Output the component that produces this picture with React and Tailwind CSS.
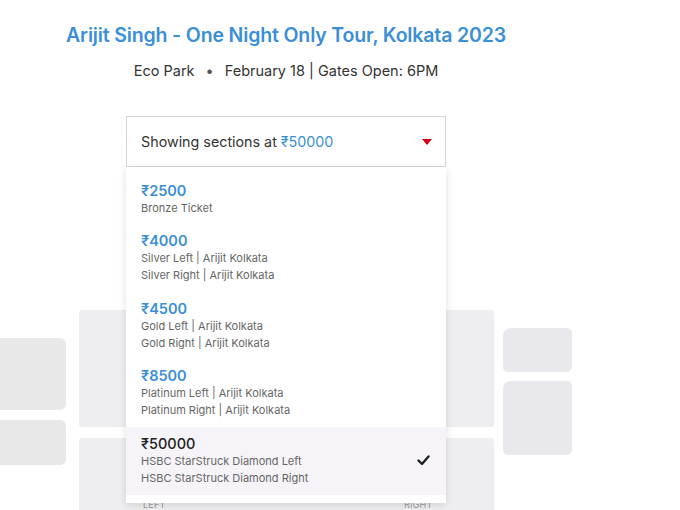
import React from "react";

const items = [
  { price: "₹2500", lines: ["Bronze Ticket"] },
  { price: "₹4000", lines: ["Silver Left | Arijit Kolkata", "Silver Right | Arijit Kolkata"] },
  { price: "₹4500", lines: ["Gold Left | Arijit Kolkata", "Gold Right | Arijit Kolkata"] },
  { price: "₹8500", lines: ["Platinum Left | Arijit Kolkata", "Platinum Right | Arijit Kolkata"] },
  { price: "₹50000", lines: ["HSBC StarStruck Diamond Left", "HSBC StarStruck Diamond Right"], selected: true },
];

function MapBlocks() {
  return (
    <div className="absolute inset-0">
      <div className="absolute left-0 top-[338px] w-[66px] h-[72px] bg-[#e8e8e8] rounded-r-[6px]" />
      <div className="absolute left-0 top-[420px] w-[66px] h-[45px] bg-[#e8e8e8] rounded-r-[6px]" />
      <div className="absolute left-[79px] top-[310px] w-[415px] h-[117px] bg-[#eeedf0] rounded-[3px]" />
      <div className="absolute left-[79px] top-[438px] w-[415px] h-[80px] bg-[#eeedf0] rounded-[3px]" />
      <div className="absolute left-[143px] top-[500px] text-[9px] leading-[10px] text-[#9a9a9a] tracking-wide">LEFT</div>
      <div className="absolute left-[404px] top-[500px] text-[9px] leading-[10px] text-[#9a9a9a] tracking-wide">RIGHT</div>
      <div className="absolute left-[503px] top-[328px] w-[69px] h-[44px] bg-[#e9e8ec] rounded-[5px] rounded-tl-[8px]" />
      <div className="absolute left-[503px] top-[381px] w-[69px] h-[74px] bg-[#e9e8ec] rounded-[5px] rounded-tl-[8px]" />
    </div>
  );
}

export default function App() {
  return (
    <div className="relative w-[680px] h-[510px] overflow-hidden bg-white font-['Inter','Noto_Sans',sans-serif]">
      <MapBlocks />
      <div className="relative w-[572px] flex flex-col items-center pt-[22px]">
        <h1 className="text-[19.5px] leading-[26px] font-semibold text-[#3a8fd6] tracking-[-0.15px]">
          Arijit Singh - One Night Only Tour, Kolkata 2023
        </h1>
        <p className="mt-[13px] text-[14.5px] leading-[20px] text-[#333333]">
          <span>Eco Park</span>
          <span className="mx-[11px] text-[#555]">•</span>
          <span>February 18 | Gates Open: 6PM</span>
        </p>
        <div className="relative mt-[35px] w-[320px]">
          <div className="h-[51px] border border-[#d6d6d6] bg-white flex items-center justify-between pl-[14px] pr-[13px]">
            <span className="text-[14.3px] text-[#333333]">
              Showing sections at <span className="text-[#3a8fd6]">₹50000</span>
            </span>
            <svg width="10" height="6" viewBox="0 0 10 6">
              <polygon points="0,0 10,0 5,6" fill="#d0021b" />
            </svg>
          </div>
          <div className="absolute left-0 top-full w-[320px] bg-white shadow-[0_2px_8px_rgba(0,0,0,0.12)] pt-[7px] pb-[8px]">
            {items.map((it) => (
              <div
                key={it.price}
                className={`flex items-center justify-between pl-[15px] pr-[16px] py-[7.75px] ${it.selected ? "bg-[#f6f4f8]" : ""}`}
              >
                <div>
                  <div className={`text-[14.5px] leading-[18px] ${it.selected ? "text-[#222222] font-medium" : "text-[#3a8fd6] font-semibold"}`}>
                    {it.price}
                  </div>
                  {it.lines.map((l) => (
                    <div key={l} className="text-[11px] leading-[17px] text-[#666666]">
                      {l}
                    </div>
                  ))}
                </div>
                {it.selected && (
                  <svg width="13" height="11" viewBox="0 0 13 11">
                    <path d="M1.5 5.5 L5 9 L11.5 1.5" stroke="#222" strokeWidth="2.4" fill="none" strokeLinecap="round" strokeLinejoin="round" />
                  </svg>
                )}
              </div>
            ))}
          </div>
        </div>
      </div>
    </div>
  );
}
